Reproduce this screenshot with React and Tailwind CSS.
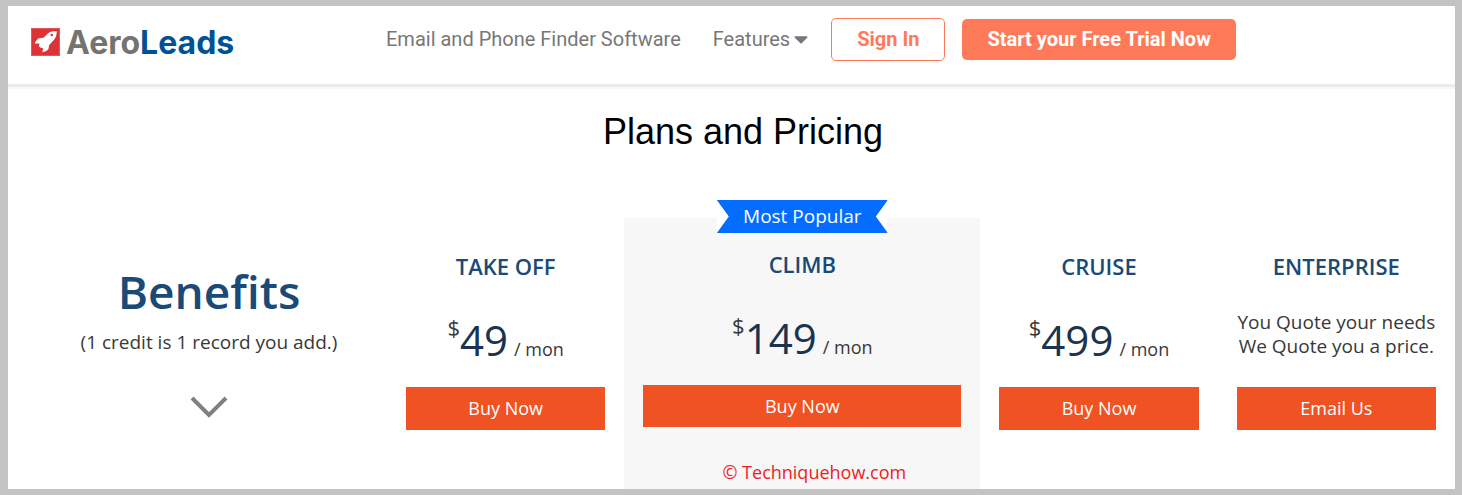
import { FaCaretDown } from 'react-icons/fa';

const plans = [
  { name: 'TAKE OFF', price: '49', action: 'Buy Now' },
  { name: 'CLIMB', price: '149', action: 'Buy Now', popular: true },
  { name: 'CRUISE', price: '499', action: 'Buy Now' },
  { name: 'ENTERPRISE', quote: ['You Quote your needs', 'We Quote you a price.'], action: 'Email Us' },
];

const Logo = () => (
  <a href="#home" className="flex w-[355px] shrink-0 items-center gap-1.5 pt-1">
    <svg viewBox="0 0 29 28" className="h-7 w-[29px]" aria-hidden="true">
      <rect width="29" height="28" fill="#e4585b" />
      <rect x="1" y="1" width="27" height="26" fill="#dd3336" />
      <path
        d="M25.8 3.2C22.8 3 20 3.4 18 4.6L12.4 9.8 7.8 10.2C6 11.4 4.6 13.2 3.6 15.4L8.6 15.4 7.8 18 9.2 19.6 12.4 20.6 11.2 24.2C13.8 23.8 16 22.8 17.4 21.2L18.2 17 22.8 12C25 9.6 25.8 6.4 25.8 3.2Z"
        fill="#fff"
      />
      <circle cx="20.8" cy="7" r="1.3" fill="#dd3336" />
    </svg>
    <span className="pt-0.5 font-['Inter',sans-serif] text-[32px] leading-8 font-bold text-[#74736f]">
      Aero<span className="text-[#015197]">Leads</span>
    </span>
  </a>
);

const Header = () => (
  <header className="flex items-center border-b-3 border-[#ebebeb] pt-3 pb-[23px] pl-[23px] font-['Roboto',sans-serif] text-xl leading-6 shadow-[0_2px_0_#f7f7f7]">
    <Logo />
    <nav className="flex items-center gap-8 pb-0.5 whitespace-nowrap text-[#777]">
      <a href="#software">Email and Phone Finder Software</a>
      <button type="button" className="flex items-center gap-1">
        Features
        <FaCaretDown className="h-6 w-[14px]" />
      </button>
    </nav>
    <div className="ml-[23px] flex items-center gap-[17px] font-bold whitespace-nowrap">
      <a href="#signin" className="rounded-[5px] border border-[#ff7a59] px-[25px] py-2 leading-[25px] text-[#ff7a59]">
        Sign In
      </a>
      <a href="#trial" className="rounded-[5px] bg-[#ff7a59] px-[25px] py-2 leading-[25px] text-white">
        Start your Free Trial Now
      </a>
    </div>
  </header>
);

const Ribbon = () => (
  <div className="absolute -top-[18px] left-1/2 w-[171px] -translate-x-1/2 bg-white">
    <p className="bg-[#046dff] text-center text-[19px] leading-[33px] text-white [clip-path:polygon(0_0,100%_0,93%_50%,100%_100%,0_100%,7%_50%)]">
      Most Popular
    </p>
  </div>
);

const Plan = ({ name, price, quote, action, popular }) => (
  <section
    className={`relative flex flex-col px-[19px] text-center ${popular ? 'bg-[#f7f7f7] pt-[31px]' : 'pt-[33px]'}`}
  >
    {popular && <Ribbon />}
    <h2 className="text-[22px] leading-[30px] font-semibold text-[#1a4a77]">{name}</h2>
    <div className="flex h-[106px] items-center justify-center text-[19px] text-[#383838]">
      {price ? (
        <p className="flex items-baseline pt-3 leading-[60px]">
          <sup className="-top-5 text-[22px] leading-none">$</sup>
          <span className="text-[42px] text-[#1b3350]">{price}</span>
          <span className="ml-1.5 text-lg">/ mon</span>
        </p>
      ) : (
        <p className="leading-6">
          {quote[0]}
          <br />
          {quote[1]}
        </p>
      )}
    </div>
    <button type="button" className={`w-full bg-[#f05223] text-lg text-white ${popular ? 'h-[42px]' : 'h-[43px] pb-0.5'}`}>
      {action}
    </button>
    {popular && <p className="pt-8 pl-6 text-lg leading-[26px] text-[#ee1c25]">© Techniquehow.com</p>}
  </section>
);

const Benefits = () => (
  <section className="flex flex-col items-center pt-[43px] text-center">
    <h2 className="text-[46px] leading-[60px] font-semibold text-[#1a4a77]">Benefits</h2>
    <p className="pt-[7px] text-[19px] leading-7 text-[#383838]">(1 credit is 1 record you add.)</p>
    <svg viewBox="0 0 38 22" className="mt-10 h-[22px] w-[38px]" fill="none" stroke="#808080" strokeWidth="4" aria-hidden="true">
      <path d="M2 2 19 19 36 2" />
    </svg>
  </section>
);

export default function App() {
  return (
    <div className="flex min-h-screen flex-col bg-[#c3c3c3] pt-1.5 pr-[7px] pb-1.5 pl-2 font-['Open_Sans',sans-serif]">
      <div className="flex grow flex-col bg-white">
        <Header />
        <main className="flex grow flex-col pl-[23px]">
          <h1 className="pt-[25px] text-center font-['Liberation_Sans',sans-serif] text-4xl text-black">Plans and Pricing</h1>
          <div className="mt-[66px] grid grow grid-cols-[3fr_2fr_3fr_2fr_2fr]">
            <Benefits />
            {plans.map((plan) => (
              <Plan key={plan.name} {...plan} />
            ))}
          </div>
        </main>
      </div>
    </div>
  );
}
